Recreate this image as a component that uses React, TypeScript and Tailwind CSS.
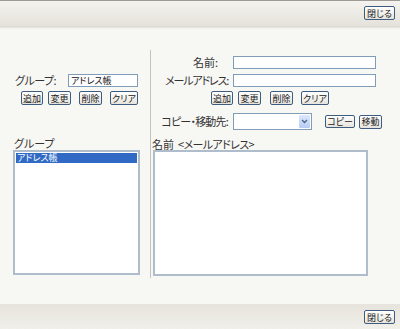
import React from "react";

const font = "font-['Noto_Sans_CJK_JP',sans-serif] [font-feature-settings:'palt']";

function Btn({ w, children, className = "" }: { w: string; children: React.ReactNode; className?: string }) {
  return (
    <div
      className={`${w} h-[14px] shrink-0 flex items-center justify-center rounded-[2px] border border-[#3d5c80] bg-gradient-to-b from-[#ffffff] to-[#e6e4dc] text-[9px] leading-none text-[#222] ${className}`}
    >
      {children}
    </div>
  );
}

export default function App() {
  return (
    <div className={`w-[400px] h-[329px] bg-[#f7f7f4] flex flex-col overflow-hidden ${font}`}>
      {/* top bar */}
      <div className="h-[26px] shrink-0 border-t border-[#9c9c94] bg-gradient-to-b from-[#f4f3ef] to-[#e4e2da] flex items-start justify-end pr-[5px] pt-[5px]">
        <Btn w="w-[31px]">閉じる</Btn>
      </div>
      <div className="h-[3px] shrink-0 bg-gradient-to-b from-[#d6d4cc] to-[#f7f7f4]" />

      {/* middle */}
      <div className="flex-1 flex">
        {/* left column */}
        <div className="w-[150px] shrink-0 flex flex-col pt-[45px]">
          <div className="flex items-center pl-[15px] h-[13px]">
            <div className="w-[53px] text-[11px] leading-none text-[#333] tracking-[-0.5px]">グループ:</div>
            <div className="w-[70px] h-[13px] border border-[#7f9db9] bg-white text-[9px] leading-[11px] pl-[2px] text-[#111]">アドレス帳</div>
          </div>
          <div className="flex mt-[4px] pl-[21px]">
            <Btn w="w-[22px]">追加</Btn>
            <Btn w="w-[23px]" className="ml-[5px]">変更</Btn>
            <Btn w="w-[23px]" className="ml-[8px]">削除</Btn>
            <Btn w="w-[28px]" className="ml-[8px]">クリア</Btn>
          </div>
          <div className="mt-[31px] h-[14px] pl-[14px] text-[11px] leading-[14px] text-[#333]">グループ</div>
          <div className="ml-[13px] w-[127px] h-[125px] border-2 border-[#aebccb] bg-white p-px">
            <div className="h-[10px] bg-[#316ac5] text-white text-[9px] leading-[10px] pl-[1px]">アドレス帳</div>
          </div>
        </div>

        {/* divider */}
        <div className="w-px shrink-0 mt-[21px] mb-[26px] bg-[#c4c4bc]" />

        {/* right column */}
        <div className="flex-1 flex flex-col pt-[27px]">
          <div className="flex items-center h-[13px]">
            <div className="w-[82px] pr-[15px] text-right text-[11px] leading-none text-[#333]">名前:</div>
            <div className="w-[143px] h-[13px] border border-[#7f9db9] bg-white" />
          </div>
          <div className="flex items-center h-[13px] mt-[5px]">
            <div className="w-[82px] pr-[5px] text-right text-[11px] leading-none text-[#333] whitespace-nowrap tracking-[-1.2px]">メールアドレス:</div>
            <div className="w-[143px] h-[13px] border border-[#7f9db9] bg-white" />
          </div>
          <div className="flex mt-[4px] pl-[60px]">
            <Btn w="w-[22px]">追加</Btn>
            <Btn w="w-[23px]" className="ml-[5px]">変更</Btn>
            <Btn w="w-[23px]" className="ml-[9px]">削除</Btn>
            <Btn w="w-[28px]" className="ml-[8px]">クリア</Btn>
          </div>
          <div className="flex items-center h-[17px] mt-[8px]">
            <div className="w-[82px] pr-[5px] text-right text-[11px] leading-none text-[#333] whitespace-nowrap tracking-[-0.8px]">コピー・移動先:</div>
            <div className="w-[79px] h-[17px] border border-[#7f9db9] bg-white flex justify-end p-px">
              <div className="w-[11px] h-full bg-gradient-to-b from-[#dde8fd] to-[#b8cbf3] rounded-[1px] flex items-center justify-center">
                <svg width="7" height="5" viewBox="0 0 7 5">
                  <path d="M1 1 L3.5 3.5 L6 1" stroke="#4d6185" strokeWidth="1.3" fill="none" />
                </svg>
              </div>
            </div>
            <Btn w="w-[30px]" className="ml-[13px] !h-[13px]">コピー</Btn>
            <Btn w="w-[23px]" className="ml-[4px]">移動</Btn>
          </div>
          <div className="mt-[8px] h-[12px] pl-[1px] text-[11px] leading-[12px] text-[#333] whitespace-nowrap flex">
            <span>名前</span>
            <span className="ml-[4px] tracking-[-0.6px]">&lt;メールアドレス&gt;</span>
          </div>
          <div className="ml-[2px] w-[215px] h-[126px] border-2 border-[#aebccb] bg-white" />
        </div>
      </div>

      {/* bottom bar */}
      <div className="h-[25px] shrink-0 bg-gradient-to-b from-[#e6e4dc] to-[#f0efea] flex items-start justify-end pr-[5px] pt-[6px]">
        <Btn w="w-[31px]">閉じる</Btn>
      </div>
    </div>
  );
}
